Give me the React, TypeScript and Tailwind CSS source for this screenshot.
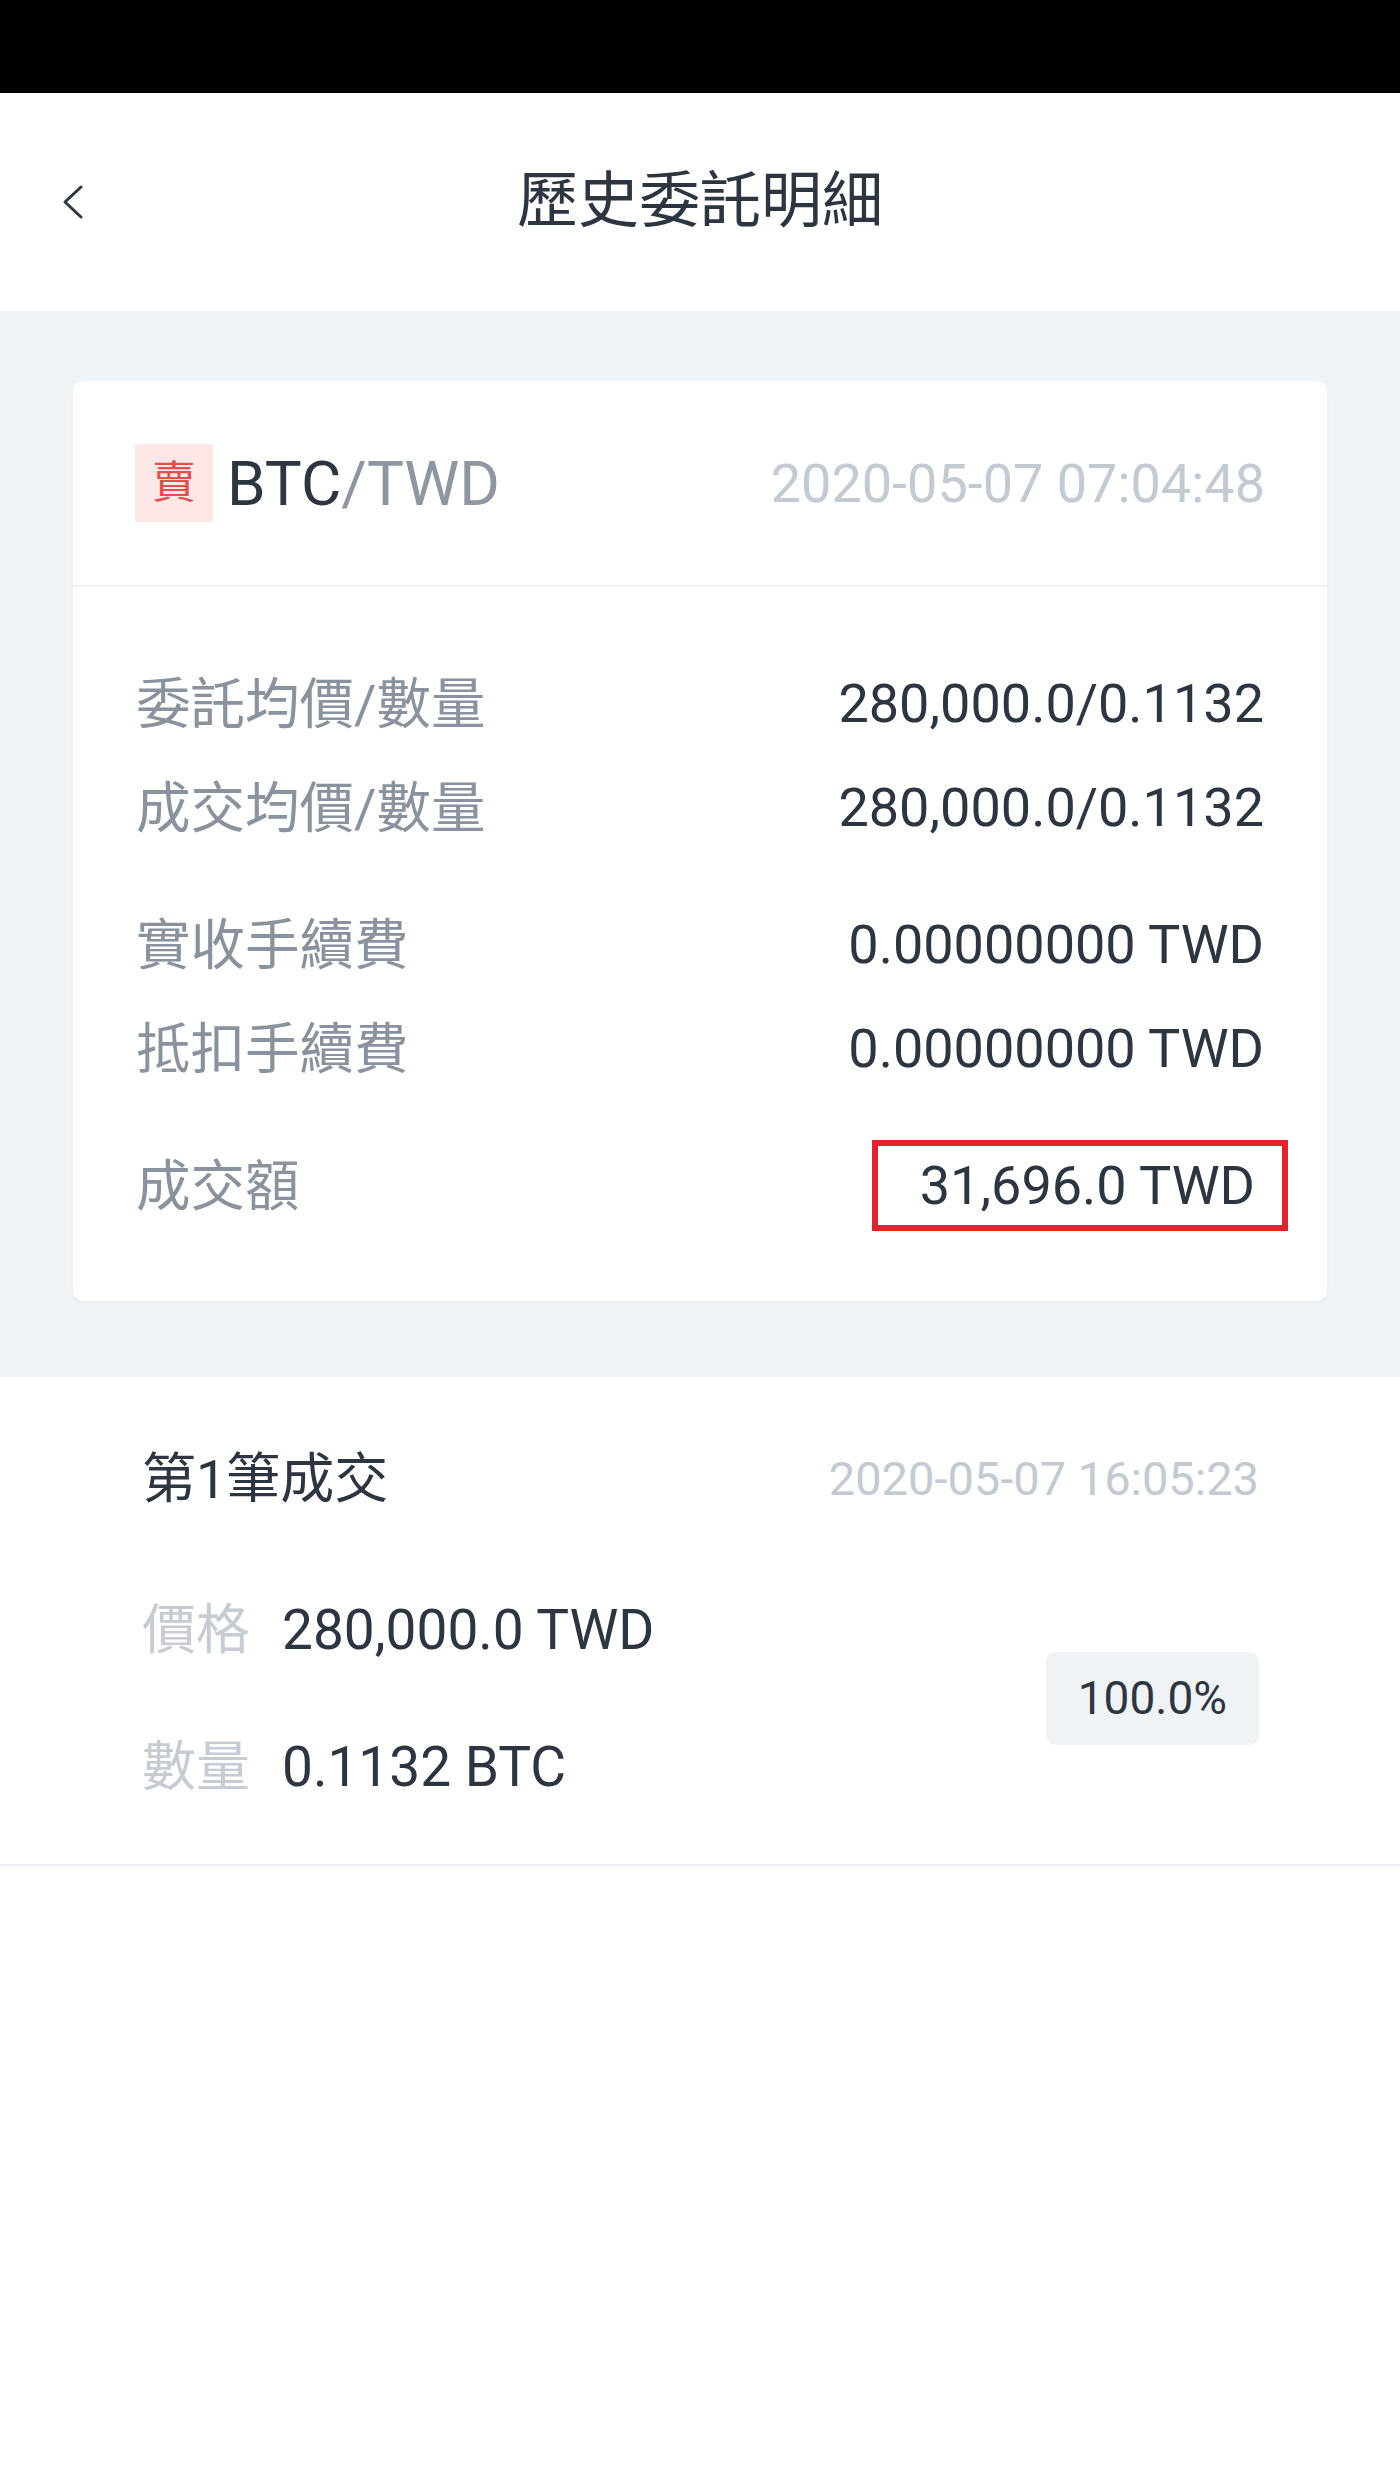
interface DetailRow {
  label: string;
  value: string;
  marked?: boolean;
}

// rows are grouped in pairs, with a wider gap between groups
const groups: DetailRow[][] = [
  [
    { label: '委託均價/數量', value: '280,000.0/0.1132' },
    { label: '成交均價/數量', value: '280,000.0/0.1132' },
  ],
  [
    { label: '實收手續費', value: '0.00000000 TWD' },
    { label: '抵扣手續費', value: '0.00000000 TWD' },
  ],
  [{ label: '成交額', value: '31,696.0 TWD', marked: true }],
];

const fills = [
  { label: '價格', value: '280,000.0 TWD' },
  { label: '數量', value: '0.1132 BTC' },
];

function OrderCard() {
  return (
    <div className="bg-white rounded-[10px] shadow-[0_1px_3px_rgba(30,45,60,0.06)]">
      <div className="h-[206px] px-[62px] flex items-center justify-between border-b-2 border-[#eff1f4]">
        <div className="flex items-center gap-[14px]">
          <span className="w-[78px] h-[78px] bg-[#fde7e7] text-[#e0504f] text-[44px] flex items-center justify-center">
            賣
          </span>
          <span className="text-[62px]">
            <span className="text-[#2c3540]">BTC</span>
            <span className="text-[#8f96a1]">/TWD</span>
          </span>
        </div>
        <span className="text-[54px] text-[#c4cad1]">2020-05-07 07:04:48</span>
      </div>

      <div className="px-[63px] pt-[65px] pb-[63px] flex flex-col gap-[33px]">
        {groups.map((group, gi) => (
          <div key={gi} className="flex flex-col">
            {group.map((row) => (
              <div key={row.label} className="h-[104px] leading-[104px] flex items-center justify-between">
                <span className="text-[54.5px] text-[#8a929e]">{row.label}</span>
                {row.marked ? (
                  <span className="relative mr-[9px] text-[54px] text-[#2c3540]">
                    {row.value}
                    <span className="absolute top-[6px] bottom-[7px] -left-[48px] -right-[33px] border-[6px] border-[#e3222b]" />
                  </span>
                ) : (
                  <span className="text-[54px] text-[#2c3540]">{row.value}</span>
                )}
              </div>
            ))}
          </div>
        ))}
      </div>
    </div>
  );
}

function FillSection() {
  return (
    <div className="bg-white border-b-2 border-[#eef0f3] pl-[142px] pr-[141px] pt-[62px] pb-[49px]">
      <div className="h-[80px] flex items-center justify-between">
        <span className="text-[54px] text-[#2c3540]">第1筆成交</span>
        <span className="text-[47px] text-[#c4cad1]">2020-05-07 16:05:23</span>
      </div>

      <div className="mt-[63px] flex items-center justify-between">
        <div className="flex flex-col gap-[41px]">
          {fills.map((f) => (
            <div key={f.label} className="h-[96px] flex items-center">
              <span className="text-[54px] text-[#c7ccd2] mr-[32px]">{f.label}</span>
              <span className="text-[55px] text-[#2c3540]">{f.value}</span>
            </div>
          ))}
        </div>
        <div className="h-[93px] px-[32px] rounded-[10px] bg-[#f0f3f6] flex items-center text-[46px] text-[#2c3540]">
          100.0%
        </div>
      </div>
    </div>
  );
}

export default function App() {
  return (
    <div className="min-h-screen bg-white font-[Roboto,'Noto_Sans_CJK_TC',sans-serif]">
      <div className="h-[93px] bg-black" />

      <header className="relative h-[218px] bg-white flex items-center justify-center">
        <button className="absolute left-[61px] top-1/2 -translate-y-1/2 text-[#2c3540]">
          <svg width="24" height="36" viewBox="0 0 24 36" fill="none">
            <polyline
              points="20,3 4,18 20,33"
              stroke="currentColor"
              strokeWidth="3"
              strokeLinecap="round"
              strokeLinejoin="round"
            />
          </svg>
        </button>
        <h1 className="text-[61px] text-[#2c3540]">歷史委託明細</h1>
      </header>

      <div className="bg-[#f1f4f7] px-[73px] pt-[70px] pb-[76px]">
        <OrderCard />
      </div>

      <FillSection />
    </div>
  );
}
